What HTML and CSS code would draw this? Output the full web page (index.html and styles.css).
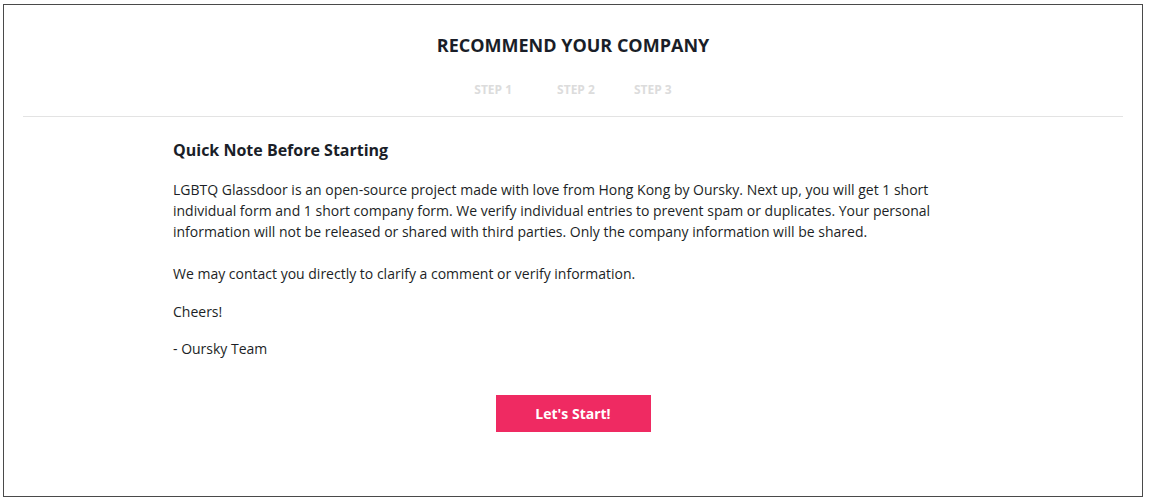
FILE: index.html
```html
<!DOCTYPE html>
<html lang="en">
<head>
<meta charset="utf-8">
<title>Recommend Your Company</title>
<link rel="stylesheet" href="styles.css">
</head>
<body>
<div class="frame">
  <header class="header">
    <h1 class="title">RECOMMEND YOUR COMPANY</h1>
    <nav class="steps">
      <span class="step step-first">STEP 1</span>
      <span class="step">STEP 2</span>
      <span class="step">STEP 3</span>
    </nav>
  </header>
  <main class="content">
    <h2 class="note-title">Quick Note Before Starting</h2>
    <p class="text">LGBTQ Glassdoor is an open-source project made with love from Hong Kong by Oursky. Next up, you will get 1 short individual form and 1 short company form. We verify individual entries to prevent spam or duplicates. Your personal information will not be released or shared with third parties. Only the company information will be shared.<br><br>We may contact you directly to clarify a comment or verify information.</p>
    <p class="text">Cheers!</p>
    <p class="text">- Oursky Team</p>
    <div class="actions">
      <button class="start-btn" type="button">Let's Start!</button>
    </div>
  </main>
</div>
</body>
</html>
```
FILE: styles.css
```css
html, body {
  margin: 0;
  padding: 0;
  background: #fff;
}
body {
  font-family: "Open Sans", "Liberation Sans", sans-serif;
  color: #1c1f26;
}
.frame {
  box-sizing: border-box;
  margin: 4px 0 0 3px;
  width: 1140px;
  height: 493px;
  border: 1px solid #4a4a4a;
}
.header {
  margin: 0 19px;
  border-bottom: 1px solid #e3e3e3;
  padding-top: 29px;
  height: 82px;
}
.title {
  margin: 0;
  text-align: center;
  font-size: 18px;
  font-weight: 700;
  line-height: 22px;
  color: #1a1e28;
}
.steps {
  display: flex;
  justify-content: center;
  gap: 39px;
  margin-top: 26px;
}
.step {
  font-size: 12px;
  font-weight: 700;
  line-height: 16px;
  color: #dcdcdc;
}
.step-first {
  margin-right: 6px;
}
.content {
  width: 800px;
  margin: 0 auto;
  padding-top: 22px;
}
.note-title {
  margin: 0 0 18px;
  font-size: 16px;
  font-weight: 700;
  line-height: 22px;
  color: #1a1e28;
}
.text {
  margin: 0 0 16.5px;
  font-size: 14px;
  line-height: 21px;
  color: #1c1f26;
}
.actions {
  display: flex;
  justify-content: center;
  padding-top: 19px;
}
.start-btn {
  width: 155px;
  height: 37px;
  border: none;
  background: #ef2a62;
  color: #fff;
  font-family: "Open Sans", "Liberation Sans", sans-serif;
  font-size: 14px;
  font-weight: 700;
  cursor: pointer;
}
```
